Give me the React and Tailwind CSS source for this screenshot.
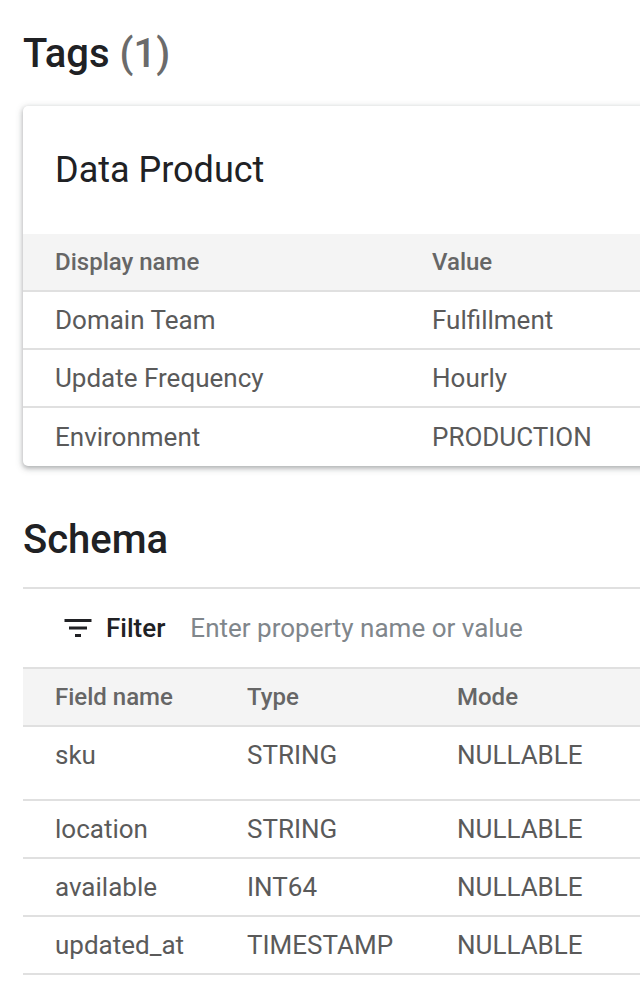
const tags = [
  { name: "Domain Team", value: "Fulfillment" },
  { name: "Update Frequency", value: "Hourly" },
  { name: "Environment", value: "PRODUCTION" },
];

const fields = [
  { name: "sku", type: "STRING", mode: "NULLABLE", tall: true },
  { name: "location", type: "STRING", mode: "NULLABLE" },
  { name: "available", type: "INT64", mode: "NULLABLE" },
  { name: "updated_at", type: "TIMESTAMP", mode: "NULLABLE" },
];

function FilterIcon() {
  return (
    <svg width="36" height="36" viewBox="0 0 24 24" className="shrink-0">
      <path d="M10 18h4v-2h-4v2zM3 6v2h18V6H3zm3 7h12v-2H6v2z" fill="#202124" />
    </svg>
  );
}

export default function App() {
  return (
    <div
      className="w-[640px] min-h-[998px] overflow-hidden bg-white pl-[23px]"
      style={{ fontFamily: "Roboto, 'Noto Sans', Arial, sans-serif" }}
    >
      <h2 className="pt-[30px] text-[40px] leading-[48px] font-medium text-[#202124]">
        Tags <span className="text-[#6b6b6b]">(1)</span>
      </h2>

      <div className="mt-[28px] w-[1000px] rounded-[5px] bg-white shadow-[0_2px_4px_rgba(60,64,67,0.3),0_2px_6px_2px_rgba(60,64,67,0.15)]">
        <div className="flex h-[128px] items-center pl-[32px] text-[36px] text-[#202124]">
          Data Product
        </div>
        <div className="flex h-[58px] items-center border-b-2 border-[#e0e0e0] bg-[#f4f4f4] text-[24px] font-medium text-[#666666]">
          <div className="w-[377px] pl-[32px]">Display name</div>
          <div className="pl-[32px]">Value</div>
        </div>
        {tags.map((t, i) => (
          <div
            key={t.name}
            className={`flex h-[58px] items-center text-[26px] text-[#5a5a5a] ${
              i < tags.length - 1 ? "border-b-2 border-[#e0e0e0]" : "h-[56px]"
            }`}
          >
            <div className="w-[377px] pl-[32px]">{t.name}</div>
            <div className="pl-[32px]">{t.value}</div>
          </div>
        ))}
      </div>

      <h2 className="mt-[50px] text-[40px] leading-[48px] font-medium text-[#202124]">
        Schema
      </h2>

      <div className="mt-[23px] w-[1000px]">
        <div className="flex h-[82px] items-center border-y-2 border-[#e0e0e0] pl-[37px]">
          <FilterIcon />
          <span className="ml-[10px] text-[26px] font-medium text-[#202124]">Filter</span>
          <span className="ml-[25px] text-[26px] text-[#80868b]">
            Enter property name or value
          </span>
        </div>
        <div className="flex h-[58px] items-center border-b-2 border-[#e0e0e0] bg-[#f4f4f4] text-[24px] font-medium text-[#666666]">
          <div className="w-[192px] pl-[32px]">Field name</div>
          <div className="w-[210px] pl-[32px]">Type</div>
          <div className="pl-[32px]">Mode</div>
        </div>
        {fields.map((f) => (
          <div
            key={f.name}
            className={`flex border-b-2 border-[#e0e0e0] text-[26px] text-[#5a5a5a] ${
              f.tall ? "h-[74px] pb-[16px]" : "h-[58px]"
            }`}
          >
            <div className="flex h-[56px] w-[192px] items-center pl-[32px]">{f.name}</div>
            <div className="flex h-[56px] w-[210px] items-center pl-[32px]">{f.type}</div>
            <div className="flex h-[56px] items-center pl-[32px]">{f.mode}</div>
          </div>
        ))}
      </div>
    </div>
  );
}
